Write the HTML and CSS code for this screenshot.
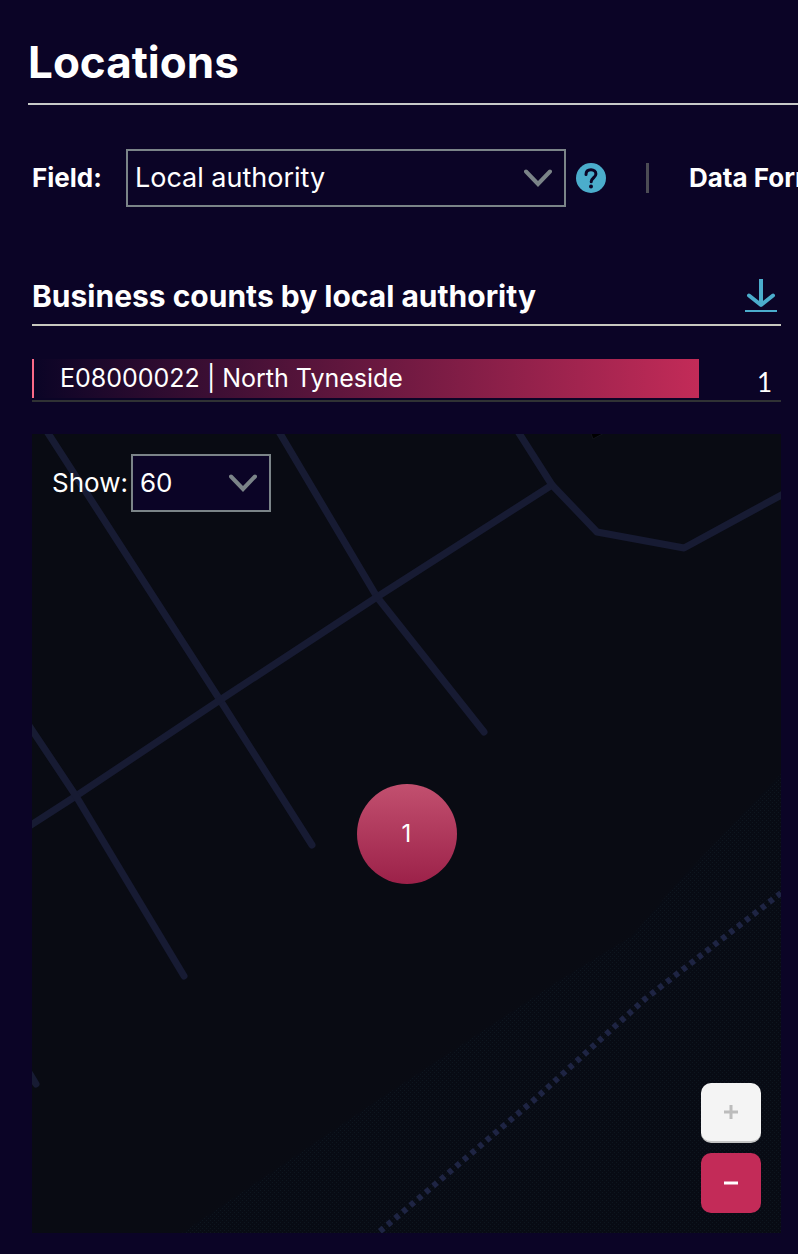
FILE: index.html
```
<!DOCTYPE html>
<html lang="en">
<head>
  <meta charset="UTF-8">
  <meta name="viewport" content="width=device-width, initial-scale=1.0">
  <title>Locations</title>
  <link rel="stylesheet" href="styles.css">
</head>
<body>

  <main class="page">
    <h1>Locations</h1>

    <div class="filters">
      <label class="filter-label" for="field">Field:</label>
      <div class="select field-select">
        <select id="field">
          <option>Local authority</option>
        </select>
        <svg class="chevron" viewBox="0 0 28 18"><path d="M2 2.500L14 15L26 2.500"/></svg>
      </div>
      <button class="help" type="button" aria-label="Help">
        <svg viewBox="0 0 30 30">
          <circle cx="15" cy="15" r="15"/>
          <path d="M10 11.500c0-3 2-4.700 5-4.700 2.900 0 4.900 1.700 4.900 4.200 0 3.700-4.700 3.800-4.700 7.800"/>
          <circle class="dot" cx="15" cy="23.500" r="2"/>
        </svg>
      </button>
      <span class="divider"></span>
      <span class="filter-label">Data Format:</span>
    </div>

    <section class="panel">
      <div class="panel-header">
        <h2>Business counts by local authority</h2>
        <a class="download" href="#" aria-label="Download">
          <svg viewBox="0 0 32 34">
            <path class="arrow" d="M16 0V25"/>
            <path class="arrow head" d="M4 16.500L16 26L28 16.500"/>
            <path class="base" d="M0 32H32"/>
          </svg>
        </a>
      </div>

      <ul class="bars">
        <li>
          <div class="bar">E08000022 | North Tyneside</div>
          <div class="count">1</div>
        </li>
      </ul>

      <div class="map">
        <svg class="map-tiles" viewBox="0 0 749 799" preserveAspectRatio="xMidYMid slice">
          <defs>
            <pattern id="water" width="4" height="4" patternUnits="userSpaceOnUse">
              <rect width="4" height="4" fill="#080b14"/>
              <rect width="1" height="1" fill="#0e161f"/>
              <rect x="2" y="2" width="1" height="1" fill="#0e161f"/>
            </pattern>
          </defs>
          <path fill="url(#water)" d="M749 340L648 446L600 502L528 546L346 666L150 799H749Z"/>
          <path class="building" d="M558 -3L561 5L576 -3"/>
          <g class="roads">
            <path d="M14 -4L188 266L280 411"/>
            <path d="M246 -4L345 163L452 298"/>
            <path d="M-4 393L44 362L188 266L345 163L520 51"/>
            <path d="M485 -4L520 51L565 98L652 114L753 59"/>
            <path d="M-4 290L44 362L152 542"/>
            <path d="M-2 640L4 650"/>
          </g>
          <path class="boundary" d="M749 459L613 565L502 666L346 799"/>
        </svg>

        <div class="show">
          <label for="show">Show:</label>
          <div class="select show-select">
            <select id="show">
              <option>60</option>
            </select>
            <svg class="chevron" viewBox="0 0 28 18"><path d="M2 2.500L14 15L26 2.500"/></svg>
          </div>
        </div>

        <button class="cluster" type="button">1</button>

        <div class="zoom">
          <button class="zoom-in" type="button" aria-label="Zoom in" disabled>
            <svg viewBox="0 0 14 14"><path d="M7 0V14M0 7H14"/></svg>
          </button>
          <button class="zoom-out" type="button" aria-label="Zoom out">
            <svg viewBox="0 0 14 14"><path d="M0 7H14"/></svg>
          </button>
        </div>
      </div>
    </section>
  </main>

</body>
</html>
```
FILE: styles.css
```
* {
  box-sizing: border-box;
}

body {
  margin: 0;
  background-color: #0b0426;
  color: #fff;
  font-family: Inter, sans-serif;
  font-size: 26px;
  line-height: 32px;
  overflow-x: hidden;
}

button, select {
  font: inherit;
  color: inherit;
}

button {
  padding: 0;
  border: 0;
  background: none;
  cursor: pointer;
}

svg {
  display: block;
  fill: none;
}

.page {
  padding: 36px 0 22px 28px;
}

h1 {
  margin: 0;
  padding-bottom: 15px;
  border-bottom: 2px solid #c8cac8;
  font-size: 44px;
  line-height: 52px;
}

.filters {
  display: flex;
  align-items: center;
  margin-top: 44px;
  padding-left: 4px;
  white-space: nowrap;
  overflow: hidden;
}

.filter-label {
  flex: none;
  font-weight: bold;
}

.select {
  position: relative;
  flex: none;
}

.select select {
  width: 100%;
  height: 58px;
  padding: 0 7px;
  border: 2px solid #7b8488;
  border-radius: 0;
  background-color: #0b0426;
  appearance: none;
}

.chevron {
  position: absolute;
  right: 14px;
  top: 20px;
  width: 28px;
  height: 18px;
  pointer-events: none;
  stroke: #7b8488;
  stroke-width: 4;
  stroke-linecap: round;
}

.field-select {
  width: 440px;
  margin-left: 24px;
}

.field-select select {
  font-size: 27px;
}

.help {
  flex: none;
  width: 30px;
  height: 30px;
  margin-left: 10px;
}

.help circle {
  fill: #4badcc;
}

.help path {
  stroke: #0b0426;
  stroke-width: 3;
  stroke-linecap: round;
}

.help .dot {
  fill: #0b0426;
}

.divider {
  flex: none;
  width: 3px;
  height: 30px;
  margin: 0 40px;
  background-color: #4c4c54;
}

.panel {
  margin: 66px 17px 0 4px;
}

.panel-header {
  display: flex;
  justify-content: space-between;
  align-items: center;
  padding: 3px 4px 8px 0;
  border-bottom: 2px solid #c8c8be;
}

h2 {
  margin: 0;
  font-size: 30px;
  line-height: 40px;
}

.download svg {
  width: 32px;
  height: 34px;
  stroke: #4badcc;
}

.download .arrow {
  stroke-width: 4;
}

.download .head {
  stroke-linecap: round;
  stroke-linejoin: round;
}

.download .base {
  stroke-width: 2;
}

.bars {
  list-style: none;
  margin: 33px 0 32px;
  padding: 0;
}

.bars li {
  display: flex;
  justify-content: space-between;
  padding-bottom: 2px;
  border-bottom: 2px solid #303234;
}

.bar {
  width: 89%;
  height: 39px;
  padding-left: 26px;
  border-left: 2px solid #fb6a88;
  background: linear-gradient(to right, #0b0426, #c32b58);
  font-size: 25px;
  line-height: 39px;
}

.count {
  padding: 7px 9px 0 0;
  font-family: Lato, sans-serif;
}

.map {
  position: relative;
  height: 799px;
  background-color: #090b13;
  overflow: hidden;
}

.map-tiles {
  width: 100%;
  height: 100%;
}

.roads path {
  stroke: #171b33;
  stroke-width: 7;
  stroke-linecap: round;
  stroke-linejoin: round;
}

.building {
  fill: #000;
  stroke: #10131c;
}

.boundary {
  stroke: #1e2443;
  stroke-width: 6;
  stroke-dasharray: 5 5;
}

/* controls over the map */
.show {
  position: absolute;
  top: 20px;
  left: 20px;
  display: flex;
  align-items: center;
  gap: 3px;
}

.show-select {
  width: 140px;
}

.cluster {
  position: absolute;
  top: 50%;
  left: 50%;
  width: 100px;
  height: 100px;
  margin: -50px;
  border-radius: 50%;
  background: linear-gradient(#c2506f, #9c2149);
  font-size: 24px;
}

.zoom {
  position: absolute;
  right: 20px;
  bottom: 20px;
  display: grid;
  gap: 10px;
}

.zoom button {
  display: grid;
  place-items: center;
  width: 60px;
  height: 60px;
  border-radius: 10px;
}

.zoom svg {
  width: 14px;
  height: 14px;
  stroke-width: 3;
}

.zoom .zoom-in {
  background-color: #f4f4f4;
  border-bottom: 2px solid #c4c4c4;
  stroke: #bcbcbc;
}

.zoom .zoom-out {
  background-color: #c32b58;
  stroke: #fff;
}
```
